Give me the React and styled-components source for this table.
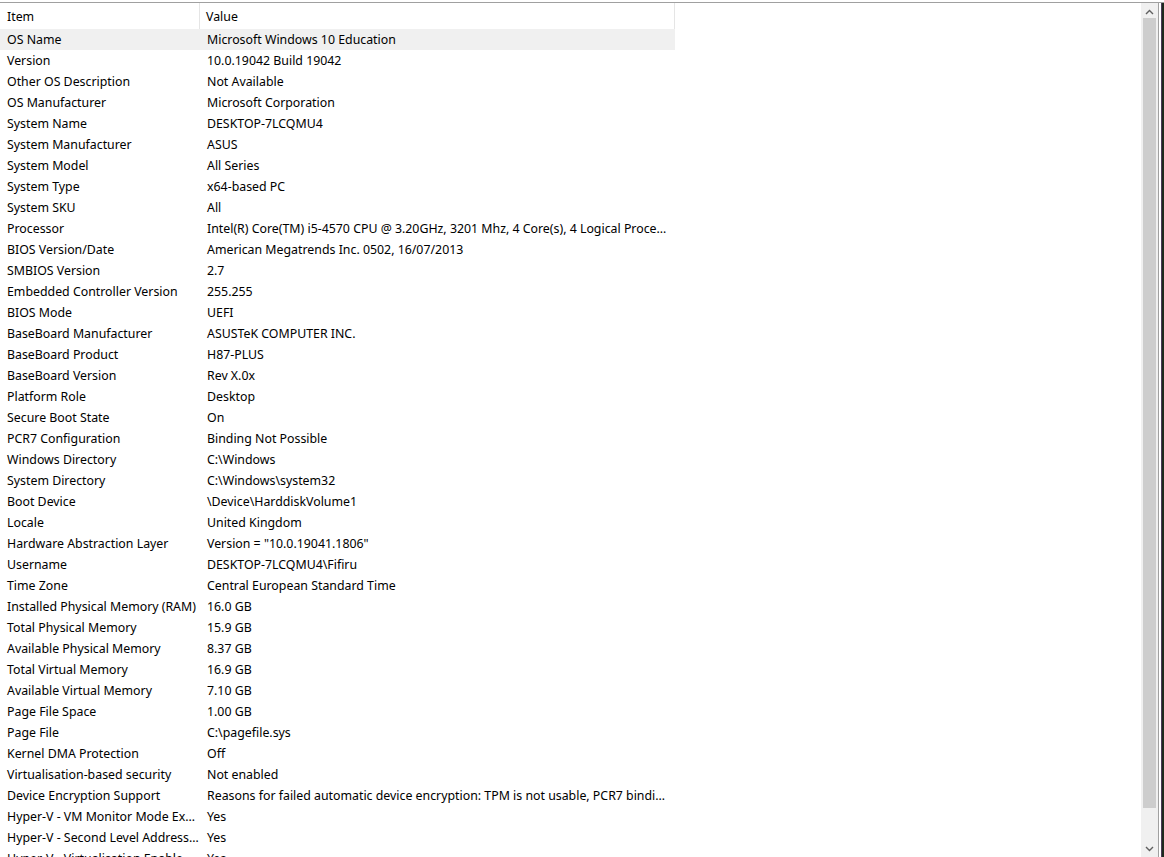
import React from "react";
import styled, { createGlobalStyle } from "styled-components";

const GlobalStyle = createGlobalStyle`
  html, body {
    margin: 0;
    padding: 0;
    background: #fff;
    overflow: hidden;
  }
  body {
    font-family: "Noto Sans", "Segoe UI", sans-serif;
    font-size: 12.35px;
    color: #000;
  }
`;

const Frame = styled.div`
  height: 857px;
  padding-top: 2px;
  box-sizing: border-box;
  display: flex;
  flex-direction: column;
  overflow: hidden;
`;

const Body = styled.div`
  flex: 1;
  display: flex;
  border-top: 1px solid #a0a0a0;
  min-height: 0;
`;

const ListArea = styled.div`
  flex: 1;
  overflow: hidden;
`;

const Row = styled.div`
  display: grid;
  grid-template-columns: 200px 475px;
  width: 675px;
  height: 21px;
  align-items: center;
  background: ${(p) => (p.selected ? "#f0f0f0" : "transparent")};
`;

const HeaderRow = styled(Row)`
  height: 26px;
`;

const Cell = styled.div`
  padding: 0 ${(p) => (p.first ? "1px" : "4px")} 0 7px;
  white-space: nowrap;
  overflow: hidden;
  text-overflow: ellipsis;
  line-height: 21px;
`;

const HeaderCell = styled.div`
  height: 26px;
  line-height: 25px;
  padding: 1px 0 0 ${(p) => (p.first ? "7px" : "6px")};
  box-sizing: border-box;
  border-right: 1px solid #e5e5e5;
  white-space: nowrap;
`;

const ScrollBar = styled.div`
  width: 17px;
  margin-left: auto;
  background: #f0f0f0;
  display: flex;
  flex-direction: column;
  align-items: center;
`;

const ArrowBox = styled.div`
  height: 17px;
  width: 17px;
  display: flex;
  align-items: center;
  justify-content: center;
  flex-shrink: 0;
`;

const Thumb = styled.div`
  flex: 1;
  width: 13px;
  margin: -2px 0 32px;
  background: #cdcdcd;
`;

const Edge = styled.div`
  width: 6px;
  display: flex;
`;

const EdgeLine = styled.div`
  width: ${(p) => p.w}px;
  background: ${(p) => p.c};
`;

const rows = [
  ["OS Name", "Microsoft Windows 10 Education"],
  ["Version", "10.0.19042 Build 19042"],
  ["Other OS Description", "Not Available"],
  ["OS Manufacturer", "Microsoft Corporation"],
  ["System Name", "DESKTOP-7LCQMU4"],
  ["System Manufacturer", "ASUS"],
  ["System Model", "All Series"],
  ["System Type", "x64-based PC"],
  ["System SKU", "All"],
  ["Processor", "Intel(R) Core(TM) i5-4570 CPU @ 3.20GHz, 3201 Mhz, 4 Core(s), 4 Logical Processor(s)"],
  ["BIOS Version/Date", "American Megatrends Inc. 0502, 16/07/2013"],
  ["SMBIOS Version", "2.7"],
  ["Embedded Controller Version", "255.255"],
  ["BIOS Mode", "UEFI"],
  ["BaseBoard Manufacturer", "ASUSTeK COMPUTER INC."],
  ["BaseBoard Product", "H87-PLUS"],
  ["BaseBoard Version", "Rev X.0x"],
  ["Platform Role", "Desktop"],
  ["Secure Boot State", "On"],
  ["PCR7 Configuration", "Binding Not Possible"],
  ["Windows Directory", "C:\\Windows"],
  ["System Directory", "C:\\Windows\\system32"],
  ["Boot Device", "\\Device\\HarddiskVolume1"],
  ["Locale", "United Kingdom"],
  ["Hardware Abstraction Layer", 'Version = "10.0.19041.1806"'],
  ["Username", "DESKTOP-7LCQMU4\\Fifiru"],
  ["Time Zone", "Central European Standard Time"],
  ["Installed Physical Memory (RAM)", "16.0 GB"],
  ["Total Physical Memory", "15.9 GB"],
  ["Available Physical Memory", "8.37 GB"],
  ["Total Virtual Memory", "16.9 GB"],
  ["Available Virtual Memory", "7.10 GB"],
  ["Page File Space", "1.00 GB"],
  ["Page File", "C:\\pagefile.sys"],
  ["Kernel DMA Protection", "Off"],
  ["Virtualisation-based security", "Not enabled"],
  ["Device Encryption Support", "Reasons for failed automatic device encryption: TPM is not usable, PCR7 binding is not supported"],
  ["Hyper-V - VM Monitor Mode Extensions", "Yes"],
  ["Hyper-V - Second Level Address Translation Extensions", "Yes"],
  ["Hyper-V - Virtualisation Enabled in Firmware", "Yes"],
];

const Arrow = ({ up }) => (
  <svg width="9" height="6" viewBox="0 0 9 6">
    <path
      d={up ? "M1 5 L4.5 1.5 L8 5" : "M1 1 L4.5 4.5 L8 1"}
      fill="none"
      stroke="#606060"
      strokeWidth="1.4"
    />
  </svg>
);

const App = () => {
  return (
    <Frame>
      <GlobalStyle />
      <Body>
        <ListArea>
          <HeaderRow>
            <HeaderCell first>Item</HeaderCell>
            <HeaderCell>Value</HeaderCell>
          </HeaderRow>
          {rows.map(([item, value], i) => (
            <Row key={item} selected={i === 0}>
              <Cell first>{item}</Cell>
              <Cell>{value}</Cell>
            </Row>
          ))}
        </ListArea>
        <ScrollBar>
          <ArrowBox>
            <Arrow up />
          </ArrowBox>
          <Thumb />
          <ArrowBox>
            <Arrow />
          </ArrowBox>
        </ScrollBar>
        <Edge>
          <EdgeLine w={1} c="#a0a0a0" />
          <EdgeLine w={2} c="#ffffff" />
          <EdgeLine w={1} c="#4a3a58" />
          <EdgeLine w={2} c="#1e2a1e" />
        </Edge>
      </Body>
    </Frame>
  );
};

export default App;
